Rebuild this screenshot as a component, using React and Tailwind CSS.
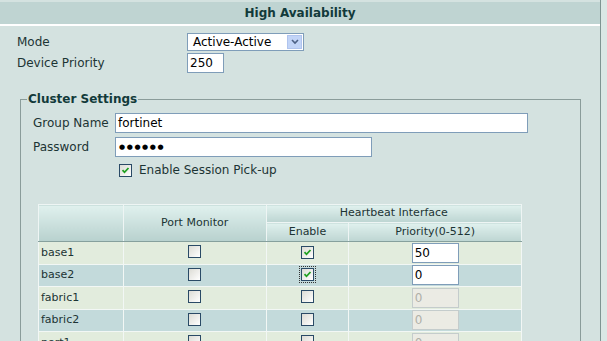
import React from 'react';

const rows = [
  { name: 'base1', hb: true, pr: '50' },
  { name: 'base2', hb: true, pr: '0', focus: true },
  { name: 'fabric1', hb: false, pr: '0' },
  { name: 'fabric2', hb: false, pr: '0' },
  { name: 'port1', hb: false, pr: '0' },
  { name: 'port2', hb: false, pr: '0' },
];

const Check = ({ checked, focus }) => (
  <span className={`inline-flex p-[1px] ${focus ? 'outline outline-1 outline-dotted outline-[#333]' : ''}`}>
    <span className="w-[13px] h-[13px] border border-[#2a4a66] bg-linear-to-br from-[#dcdcd5] to-white flex items-center justify-center">
      {checked && (
        <svg viewBox="0 0 11 11" className="w-[11px] h-[11px]">
          <path d="M2.5 5.2 L4.5 7.3 L8.5 3" stroke="#21a121" strokeWidth="1.8" fill="none" />
        </svg>
      )}
    </span>
  </span>
);

const App = () => {
  return (
    <div className="w-[607px] h-[341px] overflow-hidden bg-[#d4e2e0] flex font-['DejaVu_Sans','Liberation_Sans',sans-serif] text-[12px] text-[#1c3434]">
      <div className="w-[601px] border-r border-[#7e9492]">
        <div className="mt-[2px] h-[24px] bg-[#bfd4d2] border-b-2 border-white flex items-center justify-center font-bold text-[12px] text-[#123a3a]">
          High Availability
        </div>

        <div className="pt-[7px] pl-[17px]">
          <div className="grid grid-cols-[170px_auto] gap-y-[2px] items-center">
            <span>Mode</span>
            <div className="w-[117px] h-[18px] bg-white border border-[#7f9db9] flex items-center justify-between text-black">
              <span className="pl-[5px]">Active-Active</span>
              <span className="w-[15px] h-[14px] mr-[1px] bg-[#c2d4f7] border border-[#b0c4ee] flex items-center justify-center">
                <svg viewBox="0 0 8 6" className="w-[8px] h-[6px]">
                  <path d="M1 1 L4 4 L7 1" stroke="#4d6185" strokeWidth="1.6" fill="none" />
                </svg>
              </span>
            </div>
            <span>Device Priority</span>
            <div className="w-[37px] h-[20px] bg-white border border-[#7f9db9] flex items-center pl-[2px] text-black">250</div>
          </div>

          <fieldset className="mt-[17px] ml-[3px] w-[561px] h-[300px] border border-[#8a9c9a] pt-[5px] pl-[12px]">
            <legend className="ml-[-6px] px-[1px] font-bold text-[#123a3a]">Cluster Settings</legend>
            <div className="grid grid-cols-[82px_auto] gap-y-[4px] items-center">
              <span>Group Name</span>
              <div className="w-[413px] h-[20px] bg-white border border-[#7f9db9] flex items-center pl-[2px] text-black">fortinet</div>
              <span>Password</span>
              <div className="w-[257px] h-[20px] bg-white border border-[#7f9db9] flex items-center pl-[3px] text-[7px] tracking-[1.6px] text-black">●●●●●●</div>
            </div>
            <div className="mt-[4px] ml-[85px] flex items-center gap-[6px]">
              <Check checked />
              <span>Enable Session Pick-up</span>
            </div>

            <table className="mt-[25px] ml-[5px] w-[484px] border-collapse border border-[#eef5f4] text-[11px] text-[#1c3434]">
              <colgroup>
                <col className="w-[85px]" />
                <col className="w-[143px]" />
                <col className="w-[83px]" />
                <col className="w-[173px]" />
              </colgroup>
              <thead>
                <tr className="h-[18px]">
                  <th rowSpan={2} className="font-normal border border-[#eef5f4] border-b-[#86a09d] bg-linear-to-b from-[#e0f1ee] to-[#b8d1ce]"></th>
                  <th rowSpan={2} className="font-normal border border-[#eef5f4] border-b-[#86a09d] bg-linear-to-b from-[#e0f1ee] to-[#b8d1ce]">Port Monitor</th>
                  <th colSpan={2} className="font-normal border border-[#eef5f4] bg-linear-to-b from-[#e0f1ee] to-[#bdd5d2]">Heartbeat Interface</th>
                </tr>
                <tr className="h-[19px]">
                  <th className="font-normal border border-[#eef5f4] border-b-[#86a09d] bg-linear-to-b from-[#e0f1ee] to-[#bdd5d2]">Enable</th>
                  <th className="font-normal border border-[#eef5f4] border-b-[#86a09d] bg-linear-to-b from-[#e0f1ee] to-[#bdd5d2]">Priority(0-512)</th>
                </tr>
              </thead>
              <tbody>
                {rows.map((r, i) => (
                  <tr key={r.name} className={`h-[22px] ${i % 2 === 0 ? 'bg-[#e2ecdd]' : 'bg-[#c3dadb]'}`}>
                    <td className="border border-[#f2f7f5] pl-[2px]">{r.name}</td>
                    <td className="border border-[#f2f7f5] text-center align-middle">
                      <span className="inline-flex pt-[2px]"><Check /></span>
                    </td>
                    <td className="border border-[#f2f7f5] text-center align-middle">
                      <span className="inline-flex pt-[2px]"><Check checked={r.hb} focus={r.focus} /></span>
                    </td>
                    <td className="border border-[#f2f7f5]">
                      <div className="flex justify-center">
                        {r.hb ? (
                          <div className="w-[47px] h-[20px] bg-white border border-[#7f9db9] flex items-center pl-[2px] text-[12px] text-black">{r.pr}</div>
                        ) : (
                          <div className="w-[47px] h-[20px] bg-[#ebebe4] border border-[#c4cccc] flex items-center pl-[2px] text-[12px] text-[#b0b0a8]">{r.pr}</div>
                        )}
                      </div>
                    </td>
                  </tr>
                ))}
              </tbody>
            </table>
          </fieldset>
        </div>
      </div>
      <div className="flex-1 bg-[#dae7e5]"></div>
    </div>
  );
};

export default App;
